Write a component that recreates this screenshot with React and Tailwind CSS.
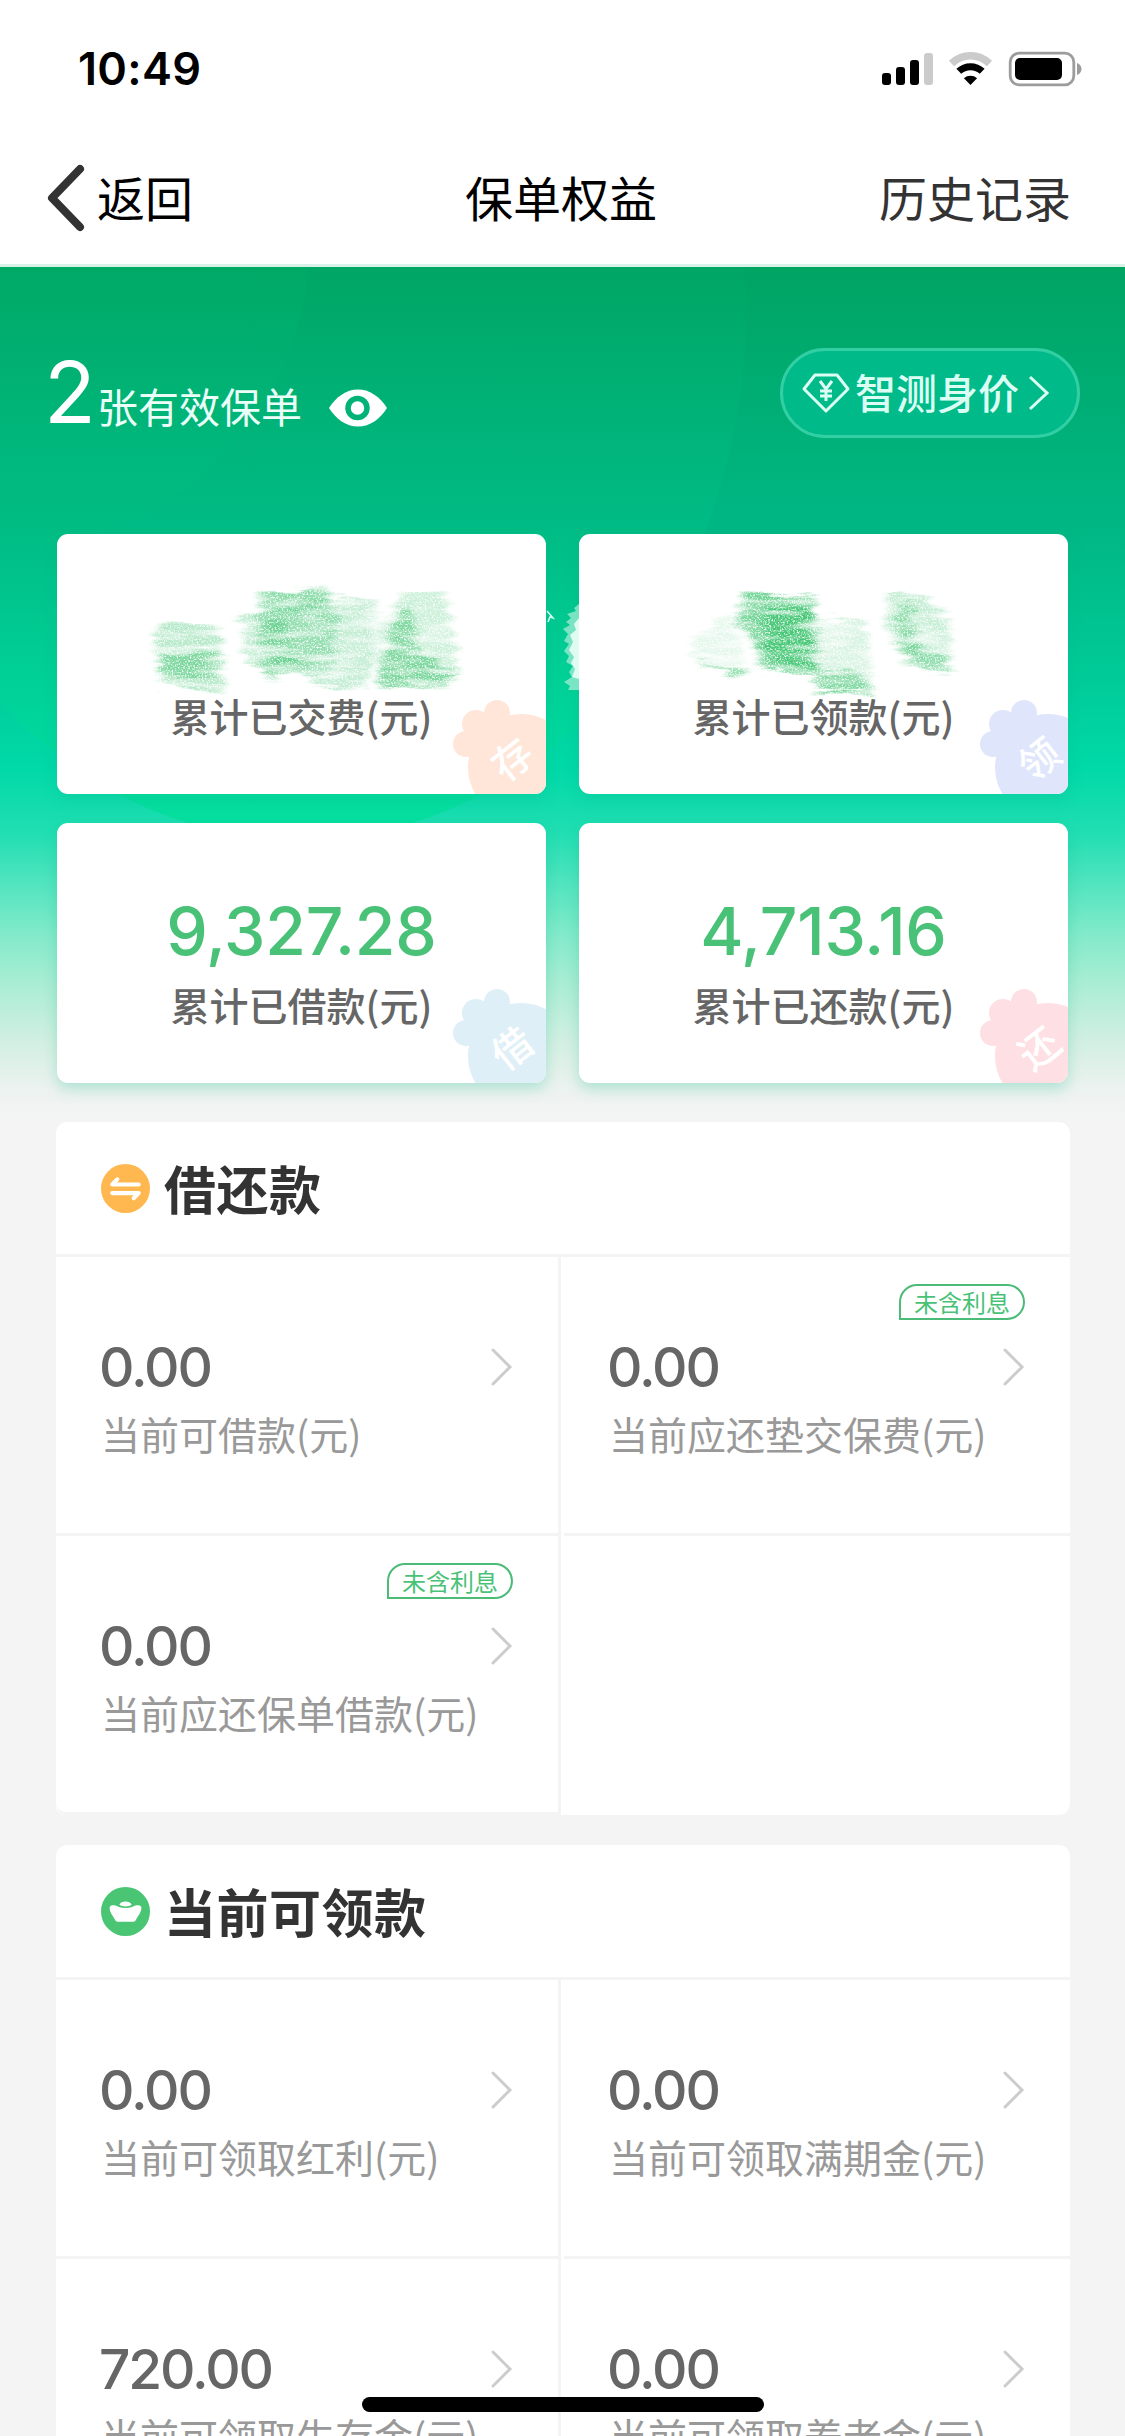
import React from 'react'

const summary = [
    { label: '累计已交费(元)', value: null, mark: '存', tint: 'text-[#ffe6d9]' },
    { label: '累计已领款(元)', value: null, mark: '领', tint: 'text-[#dfe6fb]' },
    { label: '累计已借款(元)', value: '9,327.28', mark: '借', tint: 'text-[#dfeff7]' },
    { label: '累计已还款(元)', value: '4,713.16', mark: '还', tint: 'text-[#fee0e4]' },
]

const loans = [
    { value: '0.00', label: '当前可借款(元)' },
    { value: '0.00', label: '当前应还垫交保费(元)', tag: '未含利息' },
    { value: '0.00', label: '当前应还保单借款(元)', tag: '未含利息' },
    null,
]

const payouts = [
    { value: '0.00', label: '当前可领取红利(元)' },
    { value: '0.00', label: '当前可领取满期金(元)' },
    { value: '720.00', label: '当前可领取生存金(元)' },
    { value: '0.00', label: '当前可领取养老金(元)' },
]

export default function App() {
    return (
        <div className="relative flex h-[2436px] w-[1125px] flex-col overflow-hidden bg-[#f4f4f4] font-['Noto_Sans_CJK_SC',sans-serif]">
            <StatusBar />
            <NavBar />
            <Hero />
            <Section title="借还款" icon={<SwapIcon />} items={loans} />
            <Section title="当前可领款" icon={<IngotIcon />} items={payouts} />
            <div className="absolute bottom-[24px] left-[362px] h-[15px] w-[402px] rounded-full bg-black" />
        </div>
    )
}

function StatusBar() {
    return (
        <div className="flex h-[132px] shrink-0 items-start justify-between bg-white pl-[78px] pr-[42px] pt-[47px]">
            <span className="font-['Inter',sans-serif] text-[45px] font-semibold leading-[44px] tracking-[0.3px] text-black">10:49</span>
            <svg width="202" height="36" viewBox="881 51 202 36" className="mt-[4px]">
                <rect x="882" y="73" width="9" height="12" rx="3" />
                <rect x="896" y="67" width="9" height="18" rx="3" />
                <rect x="910" y="60" width="9" height="25" rx="3" />
                <rect x="924" y="53" width="9" height="32" rx="3" fill="#cbcbcb" />
                <path d="M951.5 63.5a27 27 0 0 1 38 0" fill="none" stroke="#cbcbcb" strokeWidth="7.5" />
                <path d="M958.8 71.3a17 17 0 0 1 23.4 0" fill="none" stroke="#000" strokeWidth="7" />
                <path d="M970.5 85l-6.6-6.8a10 10 0 0 1 13.2 0z" />
                <rect x="1010.2" y="53.2" width="63.6" height="31.6" rx="9" fill="none" stroke="#9c9c9c" strokeWidth="2.8" />
                <rect x="1015" y="58" width="47" height="22" rx="5" />
                <path d="M1077 63c6 2 6 10 0 12z" fill="#9c9c9c" />
            </svg>
        </div>
    )
}

function NavBar() {
    return (
        <div className="flex h-[135px] shrink-0 items-center justify-between border-b-[3px] border-[#d9f2e8] bg-white pl-[47px] pr-[54px] text-[48px] text-black">
            <div className="flex w-[196px] items-center gap-[12px]">
                <svg width="38" height="68" viewBox="0 0 38 68" fill="none" stroke="#333" strokeWidth="8" strokeLinecap="round" strokeLinejoin="round">
                    <path d="M33 5L5 34l28 29" />
                </svg>
                <span className="-mt-[5px] whitespace-nowrap">返回</span>
            </div>
            <span className="-mt-[5px]">保单权益</span>
            <span className="-mt-[5px] text-[#333]">历史记录</span>
        </div>
    )
}

function Hero() {
    return (
        <div className="relative h-[855px] shrink-0 overflow-hidden bg-[linear-gradient(to_bottom,#00a463_0px,#00ae74_133px,#00b885_268px,#00cb98_410px,#00d9a8_500px,#20deb2_565px,#46e3bc_605px,#80eac9_665px,#acedd5_720px,#d2efe2_775px,#ebf2ef_820px,#f4f4f4_852px)] px-[57px]">
            <svg className="absolute left-0 top-0" width="1125" height="855" viewBox="0 267 1125 855">
                <defs>
                    <linearGradient id="glow" x1="0" y1="267" x2="0" y2="840" gradientUnits="userSpaceOnUse">
                        <stop offset="0" stopColor="#00b873" stopOpacity="0.08" />
                        <stop offset="0.45" stopColor="#00c887" stopOpacity="0.25" />
                        <stop offset="0.8" stopColor="#00d899" stopOpacity="0.6" />
                        <stop offset="1" stopColor="#04e09e" stopOpacity="0.95" />
                    </linearGradient>
                </defs>
                <ellipse cx="300" cy="310" rx="446" ry="530" fill="url(#glow)" />
                <circle cx="0" cy="240" r="310" fill="#00d080" opacity="0.07" />
            </svg>
            <div className="relative -mx-[9px] flex h-[267px] items-start justify-between pt-[81px]">
                <div className="-ml-[4px] flex items-baseline text-[#eafff8]">
                    <span className="w-[53px] font-['Inter',sans-serif] text-[85px] font-normal leading-[90px] tracking-[-2px] text-white">2</span>
                    <span className="text-[41px] leading-[60px]">张有效保单</span>
                    <svg width="60" height="40" viewBox="0 0 60 40" className="mb-[10px] ml-[26px] self-end">
                        <path d="M1 20C8 9 18 1.500 30 1.500S52 9 59 20c-7 11-17 18.500-29 18.500S8 31 1 20z" fill="#fff" />
                        <circle cx="29.500" cy="20" r="9.500" fill="#fff" stroke="#00b277" strokeWidth="5.500" />
                    </svg>
                </div>
                <div className="-mr-[3px] flex h-[90px] w-[300px] items-center rounded-full border-[3px] border-[#33cfa4] bg-[#00ba8a] pl-[18px] text-[#dcfff4]">
                    <svg width="50" height="42" viewBox="0 0 50 42" fill="none" stroke="currentColor" strokeWidth="3" strokeLinejoin="round">
                        <path d="M14 3h22l11 14-22 22L3 17z" />
                        <path d="M19 9l6 8 6-8M25 17v12M19 19h12M19 24h12" />
                    </svg>
                    <span className="-mt-[3px] ml-[4px] whitespace-nowrap text-[41px] font-medium">智测身价</span>
                    <svg width="22" height="38" viewBox="0 0 22 38" className="ml-[9px]" fill="none" stroke="currentColor" strokeWidth="3">
                        <path d="M2 3l17 16L2 35" />
                    </svg>
                </div>
            </div>
            <div className="relative grid grid-cols-2 gap-x-[33px] gap-y-[29px]">
                {summary.map((item, i) => (
                    <SummaryCard key={item.label} item={item} right={i % 2 === 1} />
                ))}
                <Scribbles />
            </div>
        </div>
    )
}

function SummaryCard({ item, right }) {
    return (
        <div className="relative flex h-[260px] flex-col items-center overflow-hidden rounded-[11px] bg-white shadow-[0_6px_14px_rgba(0,180,130,0.25)]">
            <div className="mt-[72px] h-[72px] font-['Inter',sans-serif] text-[66px] font-medium leading-[72px] tracking-[-0.2px] text-[#49c277]">
                {item.value}
            </div>
            <div className="mt-[8px] text-[39px] font-medium leading-[58px] text-[#666]">{item.label}</div>
            <svg
                width="100"
                height="100"
                viewBox="0 0 100 100"
                className={`absolute bottom-0 ${right ? '-right-[6px]' : '-right-px'} ${item.tint}`}
                fill="currentColor"
            >
                <circle cx="19" cy="50" r="13" />
                <circle cx="29" cy="30" r="14" />
                <circle cx="50" cy="19" r="13" />
                <circle cx="74" cy="73" r="53" />
                <text x="65" y="80" fontSize="40" fontWeight="500" fill="#fff" textAnchor="middle" transform="rotate(-38 65 65)">
                    {item.mark}
                </text>
            </svg>
        </div>
    )
}

// Crayon smudges hiding the two private amounts
function Scribbles() {
    return (
        <svg className="pointer-events-none absolute left-0 top-0" width="1011" height="170" viewBox="57 534 1011 170">
            <defs>
                <filter id="crayon" x="57" y="534" width="1011" height="170" filterUnits="userSpaceOnUse" colorInterpolationFilters="sRGB">
                    <feTurbulence type="fractalNoise" baseFrequency="0.02 0.13" numOctaves="4" seed="4" result="streak" />
                    <feGaussianBlur in="SourceGraphic" stdDeviation="3.5 1.2" result="soft" />
                    <feDisplacementMap in="soft" in2="streak" scale="22" xChannelSelector="R" result="ragged" />
                    <feColorMatrix in="streak" type="matrix" values="0 0 0 0 0  0 0 0 0 0  0 0 0 0 0  0 1.800 0 0 -0.05" result="bands" />
                    <feComposite in="ragged" in2="bands" operator="in" result="banded" />
                    <feTurbulence type="fractalNoise" baseFrequency="0.6" numOctaves="2" seed="9" />
                    <feColorMatrix type="matrix" values="0 0 0 0 0  0 0 0 0 0  0 0 0 0 0  0 0 3 0 -0.6" result="grain" />
                    <feComposite in="banded" in2="grain" operator="in" />
                </filter>
            </defs>
            <g fill="#49c878" filter="url(#crayon)" transform="translate(2 -1)">
                <path d="M156 627l56 0 8 30 2 36-60-4-10-40z" opacity="0.4" />
                <path d="M158 652l58 0 4 30-62-2z" opacity="0.5" />
                <path d="M256 594l70-4 10 25-6 58-66 4-8-40z" opacity="0.4" />
                <path d="M238 616l90-14 44-6 0 60-8 34-52-2-10-14-60-8z" opacity="0.32" />
                <path d="M262 622l18 0 20 42-30 2z" opacity="0.5" />
                <path d="M262 592l66 0 0 18-66 2z" opacity="0.4" />
                <path d="M376 625l26-32 40 0 10 48 9 34-20 12-66 0z" opacity="0.28" />
                <path d="M396 608l16 0 5 46 42 22-30 11-52-2 6-34z" opacity="0.6" />
                <path d="M690 640l40-24 16 58-58-14z" opacity="0.15" />
                <path d="M695 662l50 8-4 7-42-9z" opacity="0.5" />
                <path d="M738 592l78 8-2 74-54 2-6-30-16-18z" opacity="0.75" />
                <path d="M758 608l54 0 0 58-44-4z" opacity="1" />
                <path d="M816 620l44 0 10 50 2 22-58 0z" opacity="0.22" />
                <path d="M812 664l44 8 14 21-54-1z" opacity="0.6" />
                <path d="M882 594l44 3 22 26-2 52-44-12-20-44z" opacity="0.32" />
                <path d="M892 604l20 0 6 56-16-2z" opacity="0.5" />
                <path d="M910 645l38 12 0 18-40-10z" opacity="0.4" />
            </g>
            <path d="M547 611l6 7-3-1-2 5" fill="none" stroke="#d6fff1" strokeWidth="1.500" />
            <path
                d="M579 604l-5 4 2 3-9 3 4 4-5 4 4 3-7 4 5 5-4 7 5 3-5 7 5 5-3 6 7 4-4 6 3 5-8 5 6 4-2 4 11 0z"
                fill="#c9f5e5"
                opacity="0.6"
            />
            <path d="M579 618l-5 6 2 6-6 5 3 7-4 8 5 7-3 6 4 6-3 8 7 2z" fill="#f2fffa" opacity="0.85" />
        </svg>
    )
}

function Section({ title, icon, items }) {
    return (
        <div className="mx-[55px] mb-[30px] shrink-0 overflow-hidden rounded-[11px] pl-px">
            <div className="flex h-[135px] items-center gap-[14px] rounded-t-[11px] border-b-[3px] border-[#f4f4f4] bg-white pl-[45px]">
                {icon}
                <h2 className="-mt-[1px] text-[52px] font-bold leading-none tracking-[0.5px] text-[#333]">{title}</h2>
            </div>
            <div className="grid grid-cols-[505px_509px]">
                {items.map((item, i) => (
                    <Cell key={i} item={item} left={i % 2 === 0} last={i > 1} />
                ))}
            </div>
        </div>
    )
}

function Cell({ item, left, last }) {
    if (!item) return <div className="h-[279px] rounded-br-[11px] bg-white" />
    return (
        <div className={`h-[279px] bg-white ${left ? 'border-r-[3px] border-[#f4f4f4]' : 'pl-[3px]'}`}>
            <div
                className={`relative h-full border-b-[3px] border-[#f4f4f4] pl-[43px] pr-[44px] pt-[78px] ${last && left ? 'rounded-bl-[11px]' : ''}`}
            >
                {item.tag && (
                    <span className="absolute right-[45px] top-[27px] flex h-[36px] w-[126px] items-center justify-center rounded-full rounded-bl-none border-2 border-[#4dbb78] text-[24px] leading-none text-[#49c277]">
                        {item.tag}
                    </span>
                )}
                <div className="flex h-[64px] items-center justify-between">
                    <span className="font-['Inter',sans-serif] text-[55px] font-medium leading-[64px] tracking-[-2.1px] text-[#666]">{item.value}</span>
                    <svg width="24" height="40" viewBox="0 0 24 40" fill="none" stroke="#ccc" strokeWidth="3" strokeLinecap="round">
                        <path d="M3 3l17 17L3 37" />
                    </svg>
                </div>
                <div className="ml-[2px] mt-[5px] whitespace-nowrap text-[39px] leading-[58px] text-[#999]">{item.label}</div>
            </div>
        </div>
    )
}

function SwapIcon() {
    return (
        <svg width="49" height="49" viewBox="0 0 48 48">
            <circle cx="24" cy="24" r="24" fill="#ffb850" />
            <path d="M37 20H11l5-5M11 28.500h26l-5 5" fill="none" stroke="#fff" strokeWidth="4" strokeLinecap="round" strokeLinejoin="round" />
        </svg>
    )
}

function IngotIcon() {
    return (
        <svg width="49" height="49" viewBox="0 0 48 48">
            <circle cx="24" cy="24" r="24" fill="#49c574" />
            <path d="M18 17.500c1-4.500 11-4.500 12 0-3 2-9 2-12 0z" fill="#fff" />
            <path d="M8.500 19.500c2-2.500 6-1.500 9 0 4 1.500 9 1.500 13 0 3-1.500 7-2.500 9 0 .5 5-3 8-5.500 13-1 1.500-2 1.500-3.500 1.500h-13c-1.500 0-2.500 0-3.500-1.500-2.500-5-6-8-5.500-13z" fill="#fff" />
        </svg>
    )
}
